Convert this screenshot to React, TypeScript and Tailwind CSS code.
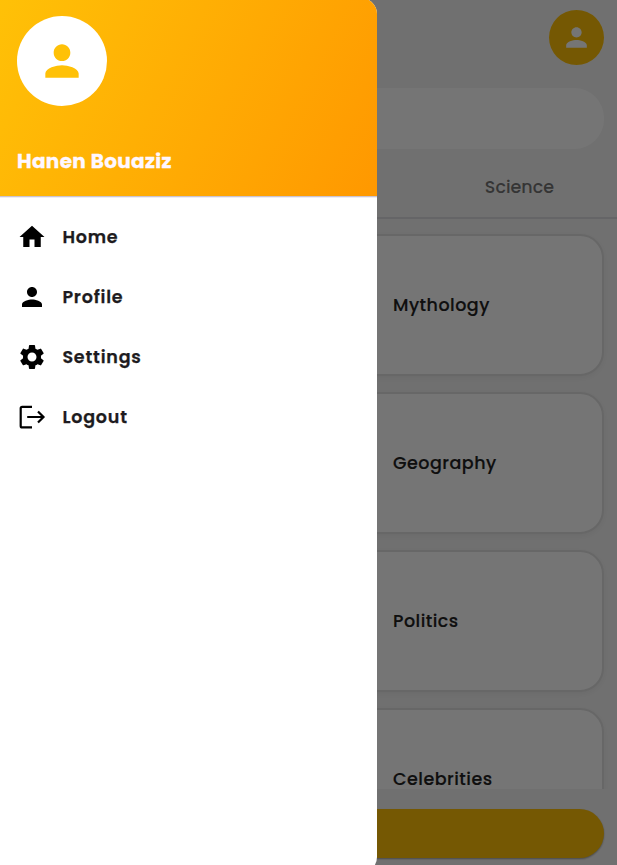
import type { ReactNode } from 'react';
import { MdHome, MdPerson, MdSettings } from 'react-icons/md';

const categories = ['Mythology', 'Geography', 'Politics', 'Celebrities'];

function LogoutIcon() {
  return (
    <svg width="30" height="30" viewBox="0 0 30 30" fill="none" stroke="currentColor" strokeWidth="2.2">
      <path d="M15 4.8H5.2a1.5 1.5 0 0 0-1.5 1.5v17.6a1.5 1.5 0 0 0 1.5 1.5H15" />
      <path d="M10.2 15h16.2M21 9.5l5.5 5.5-5.5 5.5" strokeWidth="2.2" />
    </svg>
  );
}

function MenuItem({ icon, label }: { icon: ReactNode; label: string }) {
  return (
    <li className="flex h-[60px] items-center gap-[15.4px] pl-[17px]">
      <span className="text-black">{icon}</span>
      <span className="text-[17.5px] leading-[28px] font-semibold tracking-[0.8px] text-[#1d1b20] [-webkit-text-stroke:0.25px_#1d1b20]">
        {label}
      </span>
    </li>
  );
}

function CategoryPage() {
  return (
    <div className="flex h-full flex-col bg-[#f5f5f5]">
      <header className="flex h-[88px] shrink-0 justify-end pt-[10px] pr-[13px]">
        <div className="flex size-[55px] items-center justify-center rounded-full bg-[#ffc107] text-white">
          <MdPerson size={31} />
        </div>
      </header>
      <div className="mx-[13px] h-[61px] shrink-0 rounded-[30px] bg-white" />
      <nav className="flex h-[70px] shrink-0 items-center justify-end border-b-2 border-[#dcdce0] pt-[9px] pr-[63px] text-[17.5px] font-medium text-[#757575]">
        <span>Science</span>
      </nav>
      <main className="flex h-[570px] shrink-0 flex-col gap-4 overflow-hidden px-[13px] pt-[15px]">
        {categories.map((name) => (
          <div
            key={name}
            className="flex h-[142px] shrink-0 items-center rounded-[24px] border-2 border-[#e0e0e0] bg-white pl-[378px] shadow-[0_2px_8px_rgba(0,0,0,0.06)]"
          >
            <span className="text-[17.5px] leading-[24px] font-medium tracking-[0.48px] text-[#212121] [-webkit-text-stroke:0.15px_#212121]">
              {name}
            </span>
          </div>
        ))}
      </main>
      <div className="mx-[13px] mt-[20px] h-[49px] shrink-0 rounded-full bg-[#ffc107] shadow-[0_1px_2px_rgba(0,0,0,0.35)]" />
    </div>
  );
}

export default function App() {
  return (
    <div className="relative h-[865px] w-[617px] overflow-hidden font-['Poppins','Inter',sans-serif]">
      <CategoryPage />
      <div className="absolute inset-0 bg-black/54" />
      <aside className="absolute -top-[2px] left-0 flex h-[875px] w-[377px] flex-col overflow-hidden rounded-r-[16px] bg-white">
        <div className="flex h-[199px] shrink-0 flex-col border-b border-[#cac4d0] bg-[linear-gradient(117.5deg,#ffc107,#ff9800)] pt-[18px] pl-[17px] shadow-[0_1px_0_#f0edf2]">
          <div className="flex size-[90px] items-center justify-center rounded-full bg-white text-[#ffc107]">
            <MdPerson size={50} />
          </div>
          <span className="mt-[40px] text-[20px] leading-[30px] font-bold tracking-[0.33px] text-[#fef7ff] [-webkit-text-stroke:0.3px_#fef7ff]">
            Hanen Bouaziz
          </span>
        </div>
        <ul className="flex flex-col pt-[10px]">
          <MenuItem icon={<MdHome size={30} />} label="Home" />
          <MenuItem icon={<MdPerson size={30} />} label="Profile" />
          <MenuItem icon={<MdSettings size={30} />} label="Settings" />
          <MenuItem icon={<LogoutIcon />} label="Logout" />
        </ul>
      </aside>
    </div>
  );
}
